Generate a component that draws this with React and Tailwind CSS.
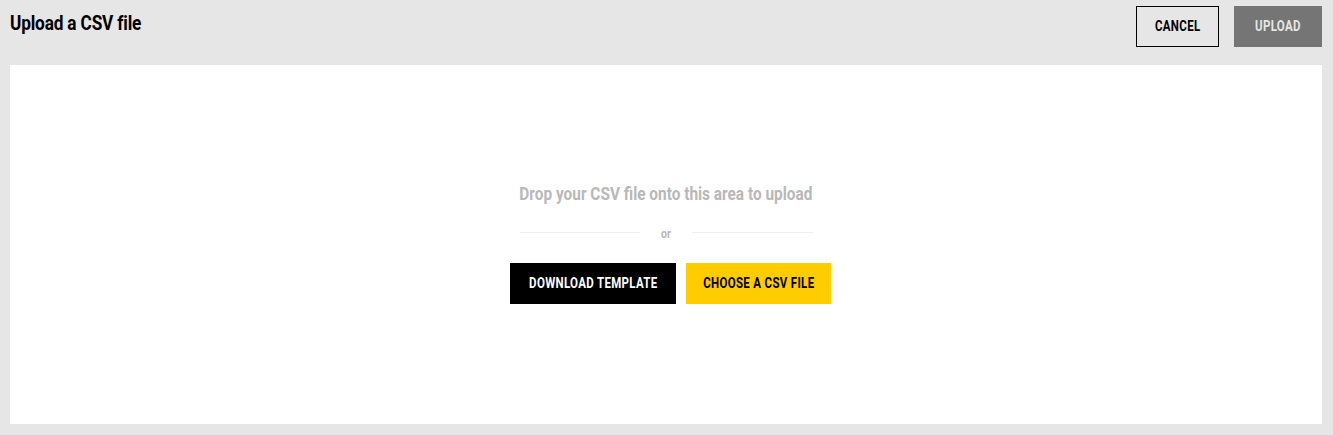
const FONT = "font-['Roboto','Liberation_Sans',sans-serif]"

// Roboto squeezed horizontally to stand in for the condensed face in the design
function Narrow({ children, className = '' }) {
  return <span className={`inline-block whitespace-nowrap ${className}`}>{children}</span>
}

export default function App() {
  return (
    <div className={`h-[435px] w-[1333px] bg-[#e6e6e6] pl-[10px] pr-[11px] pb-[11px] flex flex-col ${FONT}`}>
      {/* Header */}
      <div className="flex items-start justify-between h-[65px]">
        <h1 className="mt-[9px] text-[21px] font-bold leading-[28px] tracking-[-0.2px] text-black">
          <Narrow className="origin-left scale-x-[0.82]">Upload a CSV file</Narrow>
        </h1>
        <div className="flex gap-[15px] mt-[6px]">
          <button className="h-[41px] w-[83px] border border-black text-[14px] font-bold tracking-[0.4px] text-black">
            <Narrow className="scale-x-[0.82]">CANCEL</Narrow>
          </button>
          <button className="h-[41px] w-[88px] bg-[#757575] text-[14px] font-bold tracking-[0.4px] text-[#e6e6e6]">
            <Narrow className="scale-x-[0.82]">UPLOAD</Narrow>
          </button>
        </div>
      </div>

      {/* Drop area */}
      <div className="flex-1 bg-white flex flex-col items-center pt-[117px]">
        <p className="text-[19px] font-bold leading-[24px] text-[#b8b8b8]">
          <Narrow className="scale-x-[0.81]">Drop your CSV file onto this area to upload</Narrow>
        </p>
        <div className="flex items-center w-[293px] mt-[17px]">
          <div className="flex-1 h-px bg-[#eeeeee]" />
          <span className="px-[20px] pt-[4px] text-[13px] font-bold leading-[14px] text-[#b8b8b8]">
            <Narrow className="scale-x-[0.82]">or</Narrow>
          </span>
          <div className="flex-1 h-px bg-[#eeeeee]" />
        </div>
        <div className="flex gap-[10px] mt-[22px] ml-[9px]">
          <button className="h-[41px] w-[166px] bg-black text-white text-[14px] font-bold tracking-[0.4px]">
            <Narrow className="scale-x-[0.82]">DOWNLOAD TEMPLATE</Narrow>
          </button>
          <button className="h-[41px] w-[145px] bg-[#ffcc00] text-black text-[14px] font-bold tracking-[0.4px]">
            <Narrow className="scale-x-[0.82]">CHOOSE A CSV FILE</Narrow>
          </button>
        </div>
      </div>
    </div>
  )
}
